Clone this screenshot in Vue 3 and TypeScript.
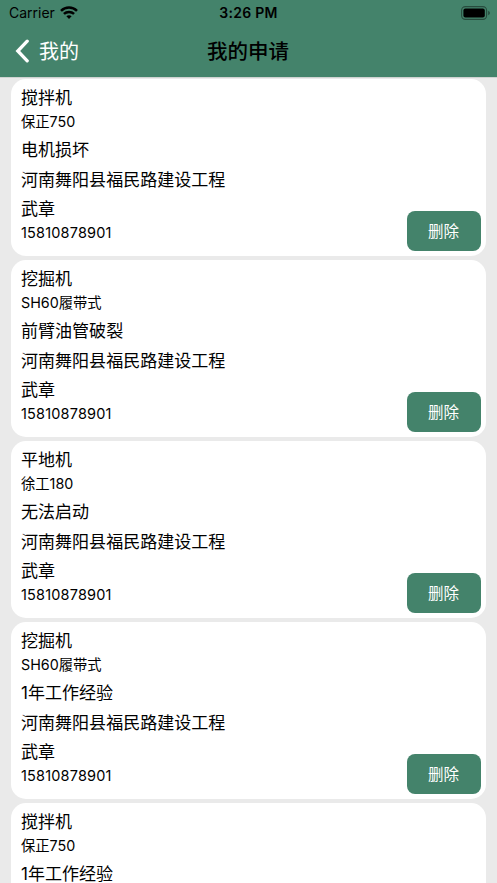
<script setup lang="ts">
interface Application {
  id: number
  machine: string
  model: string
  detail: string
  address: string
  contact: string
  phone: string
}

const address = '河南舞阳县福民路建设工程'
const contact = '武章'
const phone = '15810878901'

const applications: Application[] = [
  { id: 1, machine: '搅拌机', model: '保正750', detail: '电机损坏', address, contact, phone },
  { id: 2, machine: '挖掘机', model: 'SH60履带式', detail: '前臂油管破裂', address, contact, phone },
  { id: 3, machine: '平地机', model: '徐工180', detail: '无法启动', address, contact, phone },
  { id: 4, machine: '挖掘机', model: 'SH60履带式', detail: '1年工作经验', address, contact, phone },
  { id: 5, machine: '搅拌机', model: '保正750', detail: '1年工作经验', address, contact, phone },
]
</script>

<template>
  <div class="screen">
    <header class="header">
      <div class="status">
        <div class="carrier">
          <span>Carrier</span>
          <svg class="wifi" width="18" height="13" viewBox="0 0 18 13" fill="none" stroke="#000" stroke-width="2.5">
            <path d="M1 4.8C5.5.4 12.5.4 17 4.8" />
            <path d="M3.9 7.9c2.9-2.7 7.3-2.7 10.2 0" />
            <path d="M9 12.9 6.4 10.3c1.5-1.3 3.7-1.3 5.2 0Z" fill="#000" stroke="none" />
          </svg>
        </div>
        <span class="clock">3:26 PM</span>
        <svg class="battery" width="29" height="14" viewBox="0 0 29 14">
          <rect x=".6" y=".6" width="25" height="12.8" rx="3.8" fill="none" stroke="#000" stroke-opacity=".42" stroke-width="1.1" />
          <rect x="2.4" y="2.4" width="21.4" height="9.2" rx="2" />
          <path d="M27.3 4.8c1.9.8 1.9 3.6 0 4.4Z" fill-opacity=".5" />
        </svg>
      </div>
      <nav class="nav">
        <a class="back">
          <svg width="14" height="24" viewBox="0 0 14 24" fill="none" stroke="#fff" stroke-width="3.3" stroke-linecap="round" stroke-linejoin="miter">
            <path d="M12.2 2.2 2.8 12l9.4 9.8" />
          </svg>
          <span>我的</span>
        </a>
        <h1 class="title">我的申请</h1>
        <span />
      </nav>
    </header>
    <main class="list">
      <article v-for="item in applications" :key="item.id" class="card">
        <div class="info">
          <p class="machine">{{ item.machine }}</p>
          <p class="model">{{ item.model }}</p>
          <p class="detail">{{ item.detail }}</p>
          <p class="address">{{ item.address }}</p>
          <p class="contact">{{ item.contact }}</p>
          <p class="phone">{{ item.phone }}</p>
        </div>
        <button class="remove" type="button">删除</button>
      </article>
    </main>
  </div>
</template>

<style>
body {
  background: #eaeaea;
}
</style>

<style scoped>
.screen {
  height: 883px;
  overflow: hidden;
  display: flex;
  flex-direction: column;
  background: #eaeaea;
  color: #000;
  font-family: Inter, "Noto Sans CJK SC", sans-serif;
}
.header {
  flex: none;
  height: 77px;
  background: #44836b;
  box-shadow: 0 1px 0 #cfd3d1;
}
.status {
  height: 25px;
  display: grid;
  grid-template-columns: 1fr auto 1fr;
  align-items: center;
  padding: 0 7px 0 9px;
  font-size: 14px;
}
.carrier {
  display: flex;
  align-items: center;
  gap: 5px;
}
.clock {
  margin-right: 2px;
  font-weight: 600;
  letter-spacing: 0.3px;
}
.battery {
  justify-self: end;
}
.nav {
  height: 51px;
  display: grid;
  grid-template-columns: 1fr auto 1fr;
  align-items: center;
  padding: 0 16px 0 15px;
}
.back {
  display: flex;
  align-items: center;
  gap: 10px;
  color: #fff;
  font-size: 20px;
}
.title {
  margin: 0;
  padding-bottom: 2px;
  font-size: 20.5px;
  font-weight: 500;
}
.list {
  flex: 1;
  min-height: 0;
  display: flex;
  flex-direction: column;
  gap: 4px;
  padding: 2px 11px 0;
}
.card {
  flex: none;
  box-sizing: border-box;
  height: 177px;
  display: flex;
  justify-content: space-between;
  align-items: flex-end;
  padding: 6px 5px 5px 10px;
  border-radius: 15px;
  background: #fff;
}
.info {
  align-self: flex-start;
}
.info p {
  margin: 0;
  font-size: 17.05px;
  white-space: nowrap;
}
.info .machine {
  line-height: 25px;
}
.info .model {
  font-size: 14.3px;
  line-height: 23px;
}
.info .detail {
  line-height: 33px;
}
.info .address {
  line-height: 27px;
}
.info .contact {
  line-height: 32px;
}
.info .phone {
  font-size: 14.5px;
  letter-spacing: 0.17px;
  line-height: 16px;
}
.remove {
  width: 74px;
  height: 40px;
  padding: 0 1px 2px 0;
  border: 0;
  border-radius: 8px;
  background: #44836b;
  color: #fff;
  font-family: inherit;
  font-size: 15.5px;
}
</style>
